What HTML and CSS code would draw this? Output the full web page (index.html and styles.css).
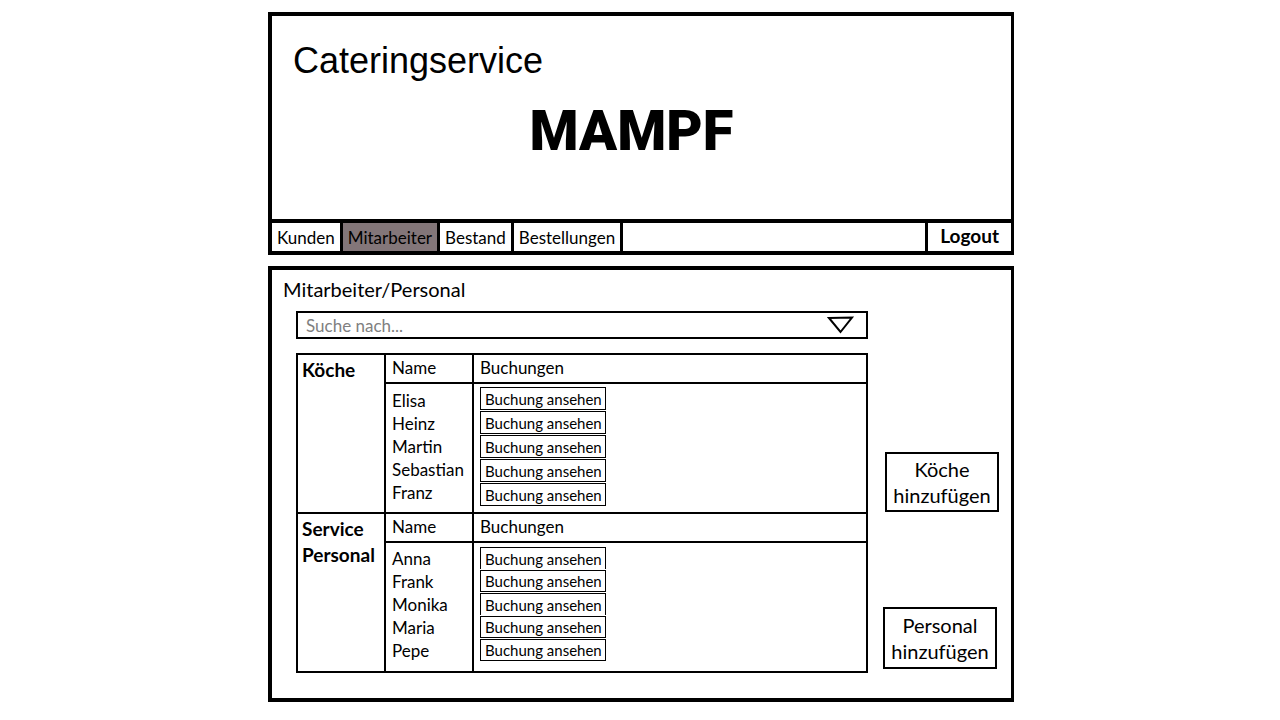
FILE: index.html
```html
<!DOCTYPE html>
<html lang="de">
<head>
<meta charset="utf-8">
<meta name="viewport" content="width=device-width, initial-scale=1">
<title>Cateringservice MAMPF – Mitarbeiter</title>
<link rel="stylesheet" href="styles.css">
</head>
<body>
<div class="page">
  <header class="header">
    <div class="banner">
      <p class="tagline">Cateringservice</p>
      <h1 class="brand">MAMPF</h1>
    </div>
    <nav class="nav">
      <a class="nav-item" href="#kunden">Kunden</a>
      <a class="nav-item active" href="#mitarbeiter" aria-current="page">Mitarbeiter</a>
      <a class="nav-item" href="#bestand">Bestand</a>
      <a class="nav-item" href="#bestellungen">Bestellungen</a>
      <button class="logout" type="button">Logout</button>
    </nav>
  </header>

  <main class="panel">
    <h2 class="title">Mitarbeiter/Personal</h2>
    <div class="content">
      <div class="listing">
        <form class="search">
          <input class="search-input" type="text" placeholder="Suche nach..." aria-label="Suche nach">
          <button class="search-toggle" type="button" aria-label="Auswahl öffnen">
            <svg width="28" height="20" viewBox="0 0 28 20" aria-hidden="true"><path d="M2 3 L25 2.500 L13.500 17 Z" fill="none" stroke="#000" stroke-width="2"/></svg>
          </button>
        </form>
        <table class="staff">
          <tbody>
            <tr class="head">
              <th class="group" rowspan="2" scope="rowgroup">Köche</th>
              <th class="name" scope="col">Name</th>
              <th scope="col">Buchungen</th>
            </tr>
            <tr>
              <td class="name">
                <ul class="names names-low">
                  <li>Elisa</li><li>Heinz</li><li>Martin</li><li>Sebastian</li><li>Franz</li>
                </ul>
              </td>
              <td>
                <div class="bookings">
                  <button class="booking" type="button" aria-label="Buchung ansehen: Elisa">Buchung ansehen</button>
                  <button class="booking" type="button" aria-label="Buchung ansehen: Heinz">Buchung ansehen</button>
                  <button class="booking" type="button" aria-label="Buchung ansehen: Martin">Buchung ansehen</button>
                  <button class="booking" type="button" aria-label="Buchung ansehen: Sebastian">Buchung ansehen</button>
                  <button class="booking" type="button" aria-label="Buchung ansehen: Franz">Buchung ansehen</button>
                </div>
              </td>
            </tr>
          </tbody>
          <tbody>
            <tr class="head">
              <th class="group" rowspan="2" scope="rowgroup">Service Personal</th>
              <th class="name" scope="col">Name</th>
              <th scope="col">Buchungen</th>
            </tr>
            <tr>
              <td class="name">
                <ul class="names">
                  <li>Anna</li><li>Frank</li><li>Monika</li><li>Maria</li><li>Pepe</li>
                </ul>
              </td>
              <td>
                <div class="bookings dense">
                  <button class="booking open" type="button" aria-label="Buchung ansehen: Anna">Buchung ansehen</button>
                  <button class="booking" type="button" aria-label="Buchung ansehen: Frank">Buchung ansehen</button>
                  <button class="booking open" type="button" aria-label="Buchung ansehen: Monika">Buchung ansehen</button>
                  <button class="booking" type="button" aria-label="Buchung ansehen: Maria">Buchung ansehen</button>
                  <button class="booking" type="button" aria-label="Buchung ansehen: Pepe">Buchung ansehen</button>
                </div>
              </td>
            </tr>
          </tbody>
        </table>
      </div>
      <div class="actions">
        <button class="add" type="button">Köche hinzufügen</button>
        <button class="add" type="button">Personal hinzufügen</button>
      </div>
    </div>
  </main>
</div>
</body>
</html>
```

FILE: styles.css
```css
* { box-sizing: border-box; }

body {
  margin: 0;
  background: #fff;
  color: #000;
  font-family: Lato, "Noto Sans", sans-serif;
  font-size: 17px;
}

button, input {
  font: inherit;
  color: inherit;
  background: #fff;
  border-radius: 0;
}

.page {
  max-width: 748px;
  margin: 0 auto;
  padding: 12px 0 12px 2px;
}

.header, .panel {
  border: 4px solid #000;
  border-right-width: 3px;
}

.banner { padding: 25px 21px 56px; }

.tagline {
  margin: 0;
  font: 36px/40px "Liberation Sans", Arial, sans-serif;
}

.brand {
  margin: 18px 20px 0 0;
  text-align: center;
  font: 900 56px/64px Roboto, sans-serif;
}

.nav {
  display: flex;
  border-top: 4px solid #000;
  line-height: 26px;
}

.nav-item {
  padding: 2px 5px 0;
  border-right: 3px solid #000;
  color: #000;
  text-decoration: none;
}

.nav-item.active { background: #837679; }

.logout {
  margin-left: auto;
  padding: 0 12px 2px;
  border: 0;
  border-left: 3px solid #000;
  font-size: 19px;
  font-weight: 700;
  line-height: 26px;
}

.panel {
  margin-top: 11px;
  padding: 7px 12px 25px 11px;
}

.title {
  margin: 0;
  font-size: 20px;
  font-weight: 400;
  line-height: 24px;
}

.content {
  display: flex;
  gap: 15px;
  padding: 10px 0 0 13px;
}

.listing { flex: 1; }

.search {
  display: flex;
  height: 28px;
  margin-bottom: 14px;
  border: 2px solid #000;
}

.search-input {
  flex: 1;
  min-width: 0;
  padding: 0 8px;
  border: 0;
}

.search-input::placeholder { color: #808080; opacity: 1; }

.search-toggle {
  display: flex;
  padding: 2px 11px;
  border: 0;
}

.staff {
  width: 100%;
  table-layout: fixed;
  border-collapse: collapse;
  border: 2px solid #000;
}

.staff th, .staff td {
  padding: 0 6px;
  border: 2px solid #000;
  text-align: left;
  vertical-align: top;
  font-weight: 400;
}

.staff .head th { height: 29px; line-height: 26px; }

.staff .head .group {
  width: 88px;
  padding: 2px 0 0 4px;
  font-size: 19px;
  font-weight: 700;
}

.staff .head .name { width: 88px; }

.names {
  margin: 0;
  padding: 4px 0 0;
  list-style: none;
  line-height: 23px;
}

.names-low { padding-top: 5px; }

.bookings {
  display: flex;
  flex-direction: column;
  align-items: flex-start;
  gap: 1px;
  padding: 3px 0 6px;
}

.booking {
  height: 23px;
  padding: 0 3px 0 4px;
  border: 1px solid #000;
  font-size: 15px;
  line-height: 20px;
  white-space: nowrap;
}

.dense { padding: 4px 0 10px; }
.dense .booking { height: 22px; }
.dense .open { border-bottom: 0; }

.actions {
  display: flex;
  flex-direction: column;
  justify-content: flex-end;
  align-items: flex-end;
  gap: 95px;
  width: 116px;
  padding-bottom: 4px;
}

.add {
  width: 114px;
  padding: 2px 4px;
  border: 2px solid #000;
  font-size: 20px;
  line-height: 26px;
}

.actions .add:last-child {
  align-self: flex-start;
  padding: 3px 4px;
}
```
